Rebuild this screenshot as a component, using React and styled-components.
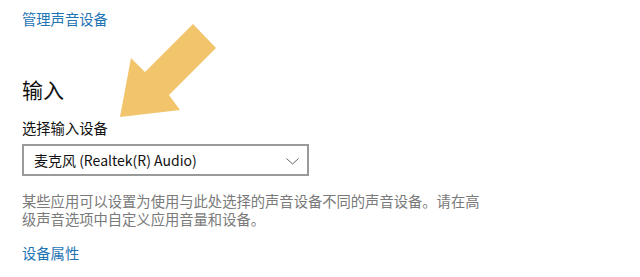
import React from 'react'
import styled, { createGlobalStyle } from 'styled-components'

const GlobalStyle = createGlobalStyle`
  html, body {
    margin: 0;
    padding: 0;
    background: #ffffff;
  }
  body {
    font-family: "Noto Sans CJK SC", "Noto Sans", sans-serif;
  }
`

const Page = styled.div`
  position: relative;
  width: 640px;
  height: 277px;
  overflow: hidden;
  padding: 9px 0 0 22px;
  box-sizing: border-box;
  display: flex;
  flex-direction: column;
  align-items: flex-start;
`

const Link = styled.a`
  font-size: 14.3px;
  line-height: 20px;
  color: #1f74b4;
  text-decoration: none;
  margin-top: ${props => props.gap || 0}px;
`

const Heading = styled.h2`
  margin: 46px 0 0;
  font-size: 21px;
  font-weight: normal;
  line-height: 28px;
  color: #111;
`

const Label = styled.div`
  margin-top: 15px;
  font-size: 14.3px;
  line-height: 20px;
  color: #111;
`

const Select = styled.div`
  margin-top: 6px;
  width: 287px;
  height: 32px;
  box-sizing: border-box;
  border: 2px solid #9a9a9a;
  display: flex;
  align-items: center;
  justify-content: space-between;
  padding: 0 8px 0 10px;
  font-size: 14px;
  color: #111;
`

const Chevron = styled.svg`
  width: 13px;
  height: 7px;
  margin-top: 2px;
`

const Description = styled.p`
  margin: 16px 0 0;
  width: 464px;
  font-size: 14.3px;
  line-height: 18px;
  color: #7a7a7a;
`

const Arrow = styled.svg`
  position: absolute;
  left: 118px;
  top: 22px;
  width: 100px;
  height: 97px;
`

export default function App() {
  return (
    <>
      <GlobalStyle />
      <Page>
        <Link href="#">管理声音设备</Link>
        <Heading>输入</Heading>
        <Label>选择输入设备</Label>
        <Select>
          <span>麦克风 (Realtek(R) Audio)</span>
          <Chevron viewBox="0 0 13 7">
            <polyline points="0.5,0.5 6.5,6 12.5,0.5" fill="none" stroke="#666" strokeWidth="1" />
          </Chevron>
        </Select>
        <Description>
          某些应用可以设置为使用与此处选择的声音设备不同的声音设备。请在高级声音选项中自定义应用音量和设备。
        </Description>
        <Link href="#" gap={15}>设备属性</Link>
        <Arrow viewBox="0 0 100 97">
          <polygon points="2,95 13,36 27,50 75,2 98,26 51,73 62,88" fill="#f2c46c" />
        </Arrow>
      </Page>
    </>
  )
}
